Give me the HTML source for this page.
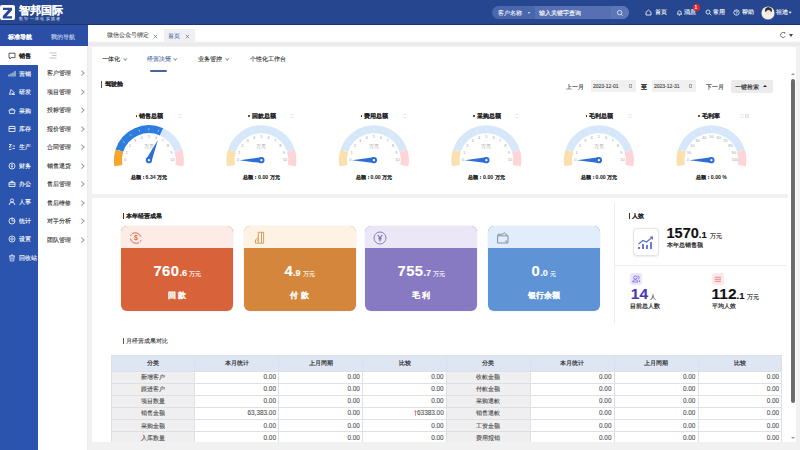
<!DOCTYPE html>
<html><head><meta charset="utf-8">
<style>
*{margin:0;padding:0;box-sizing:border-box}
html,body{width:800px;height:450px;overflow:hidden;background:#f1f1f2;font-family:"Liberation Sans",sans-serif;color:#333}
div,span{-webkit-text-stroke-width:0.12px}
div[style*="font-weight:bold"]{-webkit-text-stroke-width:0.03px}
div,span{position:absolute;white-space:nowrap}
.t6{font-size:6px;line-height:8px}
.hdr{left:0;top:0;width:800px;height:25px;background:#26478f;box-shadow:inset 0 -1px 0 rgba(0,0,0,0.25)}
.mi{left:0;width:38px;height:18px;color:#fff;font-size:6px;line-height:18px}
.mi span{left:19px;top:0}
.mi svg{position:absolute;left:8px;top:6px}
.sm{left:47px;font-size:6px;color:#333;line-height:8px}
.chev{left:80px;width:3.5px;height:3.5px;border-right:0.7px solid #999;border-top:0.7px solid #999;transform:rotate(45deg)}
.hi{top:8px;font-size:6px;line-height:8px;color:#fff}
</style></head><body>
<!-- header -->
<div class="hdr">
  <div style="left:0;top:5px;width:15px;height:15px;background:#fff;border-radius:2px">
    <svg width="15" height="15" viewBox="0 0 15 15" style="position:absolute;left:0;top:0"><path d="M3 2.8H12V5.2L6.6 11.2H12V13.4H2.8V11L8.2 5H3Z" fill="#27489b"/></svg>
  </div>
  <div style="left:18.5px;top:3.5px;font-size:11px;line-height:12px;color:#fff;font-weight:bold;letter-spacing:0px">智邦国际</div>
  <div style="left:19px;top:16px;font-size:4.2px;line-height:5px;color:#e6ebf7;letter-spacing:1.35px;-webkit-text-stroke-width:0">数智一体化实践者</div>
  <!-- search -->
  <div style="left:492px;top:6px;width:137px;height:13px;border-radius:7px;background:#4a67ad;overflow:hidden">
    <div style="left:43px;top:0;width:76px;height:13px;background:#5670b3"></div>
    <div style="left:119px;top:0;width:18px;height:13px;background:#5d76b6"></div>
    <div style="left:6px;top:2.5px;font-size:6px;line-height:8px;color:#e8edf7">客户名称</div>
    <div style="left:36px;top:6px;width:0;height:0;border-left:1.5px solid transparent;border-right:1.5px solid transparent;border-top:2px solid #e8edf7"></div>
    <div style="left:47px;top:2.5px;font-size:6px;line-height:8px;color:#fff">输入关键字查询</div>
    <svg width="8" height="8" viewBox="0 0 8 8" style="position:absolute;left:124px;top:2.5px"><circle cx="3.6" cy="3.6" r="2.2" fill="none" stroke="#e8edf7" stroke-width="0.8"/><path d="M5.2 5.2L6.6 6.6" stroke="#e8edf7" stroke-width="0.8"/></svg>
  </div>
  <!-- right icons -->
  <svg width="7" height="7" viewBox="0 0 7 7" style="position:absolute;left:645px;top:9px"><path d="M1 3.2L3.5 1L6 3.2V6H1Z" fill="none" stroke="#fff" stroke-width="0.8"/></svg>
  <div class="hi" style="left:654.5px">首页</div>
  <svg width="7" height="7" viewBox="0 0 7 7" style="position:absolute;left:676px;top:9px"><path d="M1.9 5.2V3.4A1.6 1.6 0 0 1 5.1 3.4V5.2M1 5.2H6M2.9 6.3H4.1" fill="none" stroke="#fff" stroke-width="0.75"/></svg>
  <div class="hi" style="left:684px">消息</div>
  <div style="left:692.5px;top:4px;width:7px;height:7px;border-radius:3.5px;background:#e3262a;color:#fff;font-size:5px;line-height:7px;text-align:center;font-weight:bold">1</div>
  <svg width="7" height="7" viewBox="0 0 7 7" style="position:absolute;left:705px;top:9px"><circle cx="3" cy="3" r="2" fill="none" stroke="#fff" stroke-width="0.8"/><path d="M4.5 4.5L6.3 6.3" stroke="#fff" stroke-width="0.8"/></svg>
  <div class="hi" style="left:712.5px">常用</div>
  <svg width="7" height="7" viewBox="0 0 7 7" style="position:absolute;left:733px;top:9px"><circle cx="3.5" cy="3.5" r="2.7" fill="none" stroke="#fff" stroke-width="0.75"/><path d="M2.6 2.8A0.9 0.9 0 1 1 3.5 3.7V4.3M3.5 4.8V5.4" fill="none" stroke="#fff" stroke-width="0.7"/></svg>
  <div class="hi" style="left:741.5px">帮助</div>
  <div style="left:762px;top:6.5px;width:12px;height:12px;border-radius:6px;background:#f4efe9;overflow:hidden;box-shadow:0 0 0 0.6px #dfe3ea">
    <div style="left:2.5px;top:0.5px;width:7px;height:4.5px;border-radius:3.5px 3.5px 1px 1px;background:#333"></div>
    <div style="left:3.5px;top:3.5px;width:5px;height:5px;border-radius:2.5px;background:#f3e3d2"></div>
  </div>
  <div class="hi" style="left:776px">祖迪</div>
  <div style="left:789.3px;top:11px;width:2.2px;height:2.2px;border-right:0.6px solid #dfe5f2;border-bottom:0.6px solid #dfe5f2;transform:rotate(45deg)"></div>
</div>
<!-- nav -->
<div style="left:0;top:25px;width:88px;height:425px;background:#fff;border-right:0.6px solid #ececee">
  <div style="left:0;top:0;width:88px;height:21px;background:#2b4fa7"></div>
  <div style="left:7.5px;top:7.5px;font-size:6px;line-height:8px;color:#fff;font-weight:bold">标准导航</div>
  <div style="left:51px;top:7.5px;font-size:6px;line-height:8px;color:#c9d4ee">我的导航</div>
  <svg width="8" height="8" viewBox="0 0 8 8" style="position:absolute;left:7.5px;top:26.5px"><path d="M1 1.2H7V5.6H3.2L1.8 7V5.6H1Z" fill="none" stroke="#333" stroke-width="0.8"/></svg>
  <div style="left:18.5px;top:27px;font-size:6px;line-height:8px;color:#222;font-weight:bold">销售</div>
  <svg width="8" height="7" viewBox="0 0 8 7" style="position:absolute;left:48.5px;top:26.5px"><path d="M0.5 1H7.5M3 3.5H7.5M0.5 6H7.5" stroke="#999" stroke-width="0.6"/></svg>
  <div style="left:0;top:40px;width:38px;height:385px;background:#2b54ae"></div>
</div>
<svg width="8" height="8" viewBox="0 0 8 8" style="position:absolute;left:7.5px;top:70.00px"><path d="M1 6.5V4.5M3 6.5V3.5M5 6.5V2.5M7 6.5V1" stroke="#fff" stroke-width="0.9"/></svg>
<div style="left:18.5px;top:70.00px;font-size:6px;line-height:8px;color:#fff">营销</div>
<svg width="8" height="8" viewBox="0 0 8 8" style="position:absolute;left:7.5px;top:88.35px"><path d="M1.5 6.5L3 1.5L6.5 5L1.5 6.5ZM4 6.5H7" fill="none" stroke="#fff" stroke-width="0.8"/></svg>
<div style="left:18.5px;top:88.35px;font-size:6px;line-height:8px;color:#fff">研发</div>
<svg width="8" height="8" viewBox="0 0 8 8" style="position:absolute;left:7.5px;top:106.70px"><path d="M1 3H7L6.3 6.5H1.7ZM2.5 3L3.5 1.2M5.5 3L4.5 1.2" fill="none" stroke="#fff" stroke-width="0.8"/></svg>
<div style="left:18.5px;top:106.70px;font-size:6px;line-height:8px;color:#fff">采购</div>
<svg width="8" height="8" viewBox="0 0 8 8" style="position:absolute;left:7.5px;top:125.05px"><path d="M1 1.5H7V6.5H1ZM1 3.5H7M3 1.5V0.8M5 1.5V0.8" fill="none" stroke="#fff" stroke-width="0.8"/></svg>
<div style="left:18.5px;top:125.05px;font-size:6px;line-height:8px;color:#fff">库存</div>
<svg width="8" height="8" viewBox="0 0 8 8" style="position:absolute;left:7.5px;top:143.40px"><path d="M1 1.5H3.5L1 4H3.5M4.5 3H7M4.5 5.5H7M1 6.5H3.5" fill="none" stroke="#fff" stroke-width="0.8"/></svg>
<div style="left:18.5px;top:143.40px;font-size:6px;line-height:8px;color:#fff">生产</div>
<svg width="8" height="8" viewBox="0 0 8 8" style="position:absolute;left:7.5px;top:161.75px"><circle cx="4" cy="4" r="3" fill="none" stroke="#fff" stroke-width="0.8"/><path d="M4 2.2V5.8M2.8 3H5M2.8 4.6H5" stroke="#fff" stroke-width="0.6"/></svg>
<div style="left:18.5px;top:161.75px;font-size:6px;line-height:8px;color:#fff">财务</div>
<svg width="8" height="8" viewBox="0 0 8 8" style="position:absolute;left:7.5px;top:180.10px"><path d="M1 2.5H7V6.5H1ZM3 2.5V1.2H5V2.5M1 4.2H7" fill="none" stroke="#fff" stroke-width="0.8"/></svg>
<div style="left:18.5px;top:180.10px;font-size:6px;line-height:8px;color:#fff">办公</div>
<svg width="8" height="8" viewBox="0 0 8 8" style="position:absolute;left:7.5px;top:198.45px"><circle cx="4" cy="2.5" r="1.6" fill="none" stroke="#fff" stroke-width="0.8"/><path d="M1.2 7A2.8 2.8 0 0 1 6.8 7" fill="none" stroke="#fff" stroke-width="0.8"/></svg>
<div style="left:18.5px;top:198.45px;font-size:6px;line-height:8px;color:#fff">人事</div>
<svg width="8" height="8" viewBox="0 0 8 8" style="position:absolute;left:7.5px;top:216.80px"><circle cx="4" cy="4" r="3" fill="none" stroke="#fff" stroke-width="0.8"/><path d="M4 1V4H7" fill="none" stroke="#fff" stroke-width="0.8"/></svg>
<div style="left:18.5px;top:216.80px;font-size:6px;line-height:8px;color:#fff">统计</div>
<svg width="8" height="8" viewBox="0 0 8 8" style="position:absolute;left:7.5px;top:235.15px"><circle cx="4" cy="4" r="3" fill="none" stroke="#fff" stroke-width="0.8"/><circle cx="4" cy="4" r="1.2" fill="none" stroke="#fff" stroke-width="0.8"/></svg>
<div style="left:18.5px;top:235.15px;font-size:6px;line-height:8px;color:#fff">设置</div>
<svg width="8" height="8" viewBox="0 0 8 8" style="position:absolute;left:7.5px;top:253.50px"><path d="M1 2H7M3 2V1H5V2M1.8 2L2.3 7H5.7L6.2 2M3.3 3.5V5.5M4.7 3.5V5.5" fill="none" stroke="#fff" stroke-width="0.7"/></svg>
<div style="left:18.5px;top:253.50px;font-size:6px;line-height:8px;color:#fff">回收站</div>
<div style="left:47px;top:69.00px;font-size:6px;line-height:8px;color:#333">客户管理</div>
<div class="chev" style="top:71.20px"></div>
<div style="left:47px;top:87.50px;font-size:6px;line-height:8px;color:#333">项目管理</div>
<div class="chev" style="top:89.70px"></div>
<div style="left:47px;top:106.00px;font-size:6px;line-height:8px;color:#333">投标管理</div>
<div class="chev" style="top:108.20px"></div>
<div style="left:47px;top:124.50px;font-size:6px;line-height:8px;color:#333">报价管理</div>
<div class="chev" style="top:126.70px"></div>
<div style="left:47px;top:143.00px;font-size:6px;line-height:8px;color:#333">合同管理</div>
<div class="chev" style="top:145.20px"></div>
<div style="left:47px;top:161.50px;font-size:6px;line-height:8px;color:#333">销售退货</div>
<div class="chev" style="top:163.70px"></div>
<div style="left:47px;top:180.00px;font-size:6px;line-height:8px;color:#333">售后管理</div>
<div class="chev" style="top:182.20px"></div>
<div style="left:47px;top:198.50px;font-size:6px;line-height:8px;color:#333">售后维修</div>
<div class="chev" style="top:200.70px"></div>
<div style="left:47px;top:217.00px;font-size:6px;line-height:8px;color:#333">对手分析</div>
<div class="chev" style="top:219.20px"></div>
<div style="left:47px;top:235.50px;font-size:6px;line-height:8px;color:#333">团队管理</div>
<div class="chev" style="top:237.70px"></div>

<div style="left:88px;top:25px;width:712px;height:16px;background:#fff"></div>
<div style="left:88px;top:40.5px;width:712px;height:6.5px;background:linear-gradient(#fbfbfb,#e9e9ea 45%,#ececed 70%,#f3f3f3)"></div>
<div style="left:106.5px;top:31px;font-size:6px;line-height:8px;color:#555">微信公众号绑定</div>
<svg width="5" height="5" viewBox="0 0 5 5" style="position:absolute;left:152.9px;top:33.6px"><path d="M0.8 0.8L4.2 4.2M4.2 0.8L0.8 4.2" stroke="#555" stroke-width="0.6"/></svg>
<div style="left:164px;top:29px;width:31px;height:12.5px;background:#eff0f3"></div>
<div style="left:167.5px;top:31.5px;font-size:6px;line-height:8px;color:#5a75ae">首页</div>
<svg width="5" height="5" viewBox="0 0 5 5" style="position:absolute;left:184.7px;top:33.6px"><path d="M0.8 0.8L4.2 4.2M4.2 0.8L0.8 4.2" stroke="#555" stroke-width="0.6"/></svg>
<svg width="8" height="8" viewBox="0 0 8 8" style="position:absolute;left:779px;top:31px"><path d="M6 2.5A2.5 2.5 0 1 0 6.3 5" fill="none" stroke="#555" stroke-width="0.8"/><path d="M4.8 1.5L6.4 2.6L6 0.9Z" fill="#555"/></svg>
<div style="left:789px;top:33.5px;width:0;height:0;border-left:2.5px solid transparent;border-right:2.5px solid transparent;border-top:3px solid #444"></div>
<div style="left:92px;top:47px;width:704px;height:147px;background:#fff"></div>
<div style="left:92px;top:198px;width:704px;height:243.8px;background:#fff"></div>
<div style="left:101.5px;top:54.5px;font-size:6px;line-height:8px;color:#333">一体化</div>
<div style="left:123.7px;top:56.8px;width:2.6px;height:2.6px;border-right:0.6px solid #999;border-bottom:0.6px solid #999;transform:rotate(45deg)"></div>
<div style="left:146.5px;top:54.5px;font-size:6px;line-height:8px;color:#5571ae">经营决策</div>
<div style="left:173.7px;top:56.8px;width:2.6px;height:2.6px;border-right:0.6px solid #999;border-bottom:0.6px solid #999;transform:rotate(45deg)"></div>
<div style="left:198px;top:54.5px;font-size:6px;line-height:8px;color:#333">业务管控</div>
<div style="left:226.2px;top:56.8px;width:2.6px;height:2.6px;border-right:0.6px solid #999;border-bottom:0.6px solid #999;transform:rotate(45deg)"></div>
<div style="left:249.5px;top:54.5px;font-size:6px;line-height:8px;color:#333">个性化工作台</div>
<div style="left:150px;top:69.5px;width:17px;height:2px;background:#4a62a0;border-radius:1px"></div>
<div style="left:101.2px;top:81px;width:1px;height:6.5px;background:#555"></div>
<div style="left:104.5px;top:80px;font-size:6px;line-height:8px;color:#222;font-weight:bold">驾驶舱</div>
<div style="left:566px;top:82.5px;font-size:5.5px;line-height:8px;color:#333">上一月</div>
<div style="left:591px;top:80px;width:45px;height:11.5px;background:#f0f0f0;border-radius:1px"></div>
<div style="left:593px;top:82px;font-size:5px;line-height:8px;color:#444">2023-12-01</div>
<div style="left:628.5px;top:84px;width:3.5px;height:3.5px;border:0.6px solid #aaa"></div>
<div style="left:641px;top:82.5px;font-size:5.5px;line-height:8px;color:#222;font-weight:bold">至</div>
<div style="left:652px;top:80px;width:44px;height:11.5px;background:#f0f0f0;border-radius:1px"></div>
<div style="left:654px;top:82px;font-size:5px;line-height:8px;color:#444">2023-12-31</div>
<div style="left:688.5px;top:84px;width:3.5px;height:3.5px;border:0.6px solid #aaa"></div>
<div style="left:705.5px;top:82.5px;font-size:5.5px;line-height:8px;color:#333">下一月</div>
<div style="left:731px;top:80px;width:42px;height:12.5px;background:#ececec;border-radius:1px"></div>
<div style="left:735px;top:82.5px;font-size:5.5px;line-height:8px;color:#222">一键检索</div>
<div style="left:763px;top:85px;width:0;height:0;border-left:2px solid transparent;border-right:2px solid transparent;border-bottom:2.2px solid #222"></div>
<div style="left:788px;top:47px;width:8px;height:394.8px;background:#fff"></div>
<div style="left:791px;top:78.5px;width:4px;height:324px;background:#6b6b6b;border-radius:2px"></div>
<div style="left:790.8px;top:73.2px;width:0;height:0;border-left:2.2px solid transparent;border-right:2.2px solid transparent;border-bottom:2.8px solid #9a9a9a"></div>
<div style="left:790.8px;top:436.5px;width:0;height:0;border-left:2.2px solid transparent;border-right:2.2px solid transparent;border-top:2.8px solid #9a9a9a"></div>
<div style="left:135.90px;top:115.3px;width:1.6px;height:1.6px;border-radius:1px;background:#222"></div>
<div style="left:139.30px;top:112.3px;font-size:6px;line-height:8px;color:#222;font-weight:bold">销售总额</div>
<svg width="6" height="6" viewBox="0 0 6 6" style="position:absolute;left:176.90px;top:113px"><path d="M1.2 2.5A2 2 0 0 1 4.8 2.2M4.8 3.5A2 2 0 0 1 1.2 3.8" fill="none" stroke="#d6d6d6" stroke-width="0.6"/></svg>
<div style="left:108.90px;width:80px;text-align:center;top:173px;font-size:5.2px;line-height:8px;color:#222;font-weight:bold">总额：6.34 万元</div>
<div style="left:248.40px;top:115.3px;width:1.6px;height:1.6px;border-radius:1px;background:#222"></div>
<div style="left:251.80px;top:112.3px;font-size:6px;line-height:8px;color:#222;font-weight:bold">回款总额</div>
<svg width="6" height="6" viewBox="0 0 6 6" style="position:absolute;left:289.40px;top:113px"><path d="M1.2 2.5A2 2 0 0 1 4.8 2.2M4.8 3.5A2 2 0 0 1 1.2 3.8" fill="none" stroke="#d6d6d6" stroke-width="0.6"/></svg>
<div style="left:221.40px;width:80px;text-align:center;top:173px;font-size:5.2px;line-height:8px;color:#222;font-weight:bold">总额：0.00 万元</div>
<div style="left:360.90px;top:115.3px;width:1.6px;height:1.6px;border-radius:1px;background:#222"></div>
<div style="left:364.30px;top:112.3px;font-size:6px;line-height:8px;color:#222;font-weight:bold">费用总额</div>
<svg width="6" height="6" viewBox="0 0 6 6" style="position:absolute;left:401.90px;top:113px"><path d="M1.2 2.5A2 2 0 0 1 4.8 2.2M4.8 3.5A2 2 0 0 1 1.2 3.8" fill="none" stroke="#d6d6d6" stroke-width="0.6"/></svg>
<div style="left:333.90px;width:80px;text-align:center;top:173px;font-size:5.2px;line-height:8px;color:#222;font-weight:bold">总额：0.00 万元</div>
<div style="left:473.40px;top:115.3px;width:1.6px;height:1.6px;border-radius:1px;background:#222"></div>
<div style="left:476.80px;top:112.3px;font-size:6px;line-height:8px;color:#222;font-weight:bold">采购总额</div>
<svg width="6" height="6" viewBox="0 0 6 6" style="position:absolute;left:514.40px;top:113px"><path d="M1.2 2.5A2 2 0 0 1 4.8 2.2M4.8 3.5A2 2 0 0 1 1.2 3.8" fill="none" stroke="#d6d6d6" stroke-width="0.6"/></svg>
<div style="left:446.40px;width:80px;text-align:center;top:173px;font-size:5.2px;line-height:8px;color:#222;font-weight:bold">总额：0.00 万元</div>
<div style="left:585.90px;top:115.3px;width:1.6px;height:1.6px;border-radius:1px;background:#222"></div>
<div style="left:589.30px;top:112.3px;font-size:6px;line-height:8px;color:#222;font-weight:bold">毛利总额</div>
<svg width="6" height="6" viewBox="0 0 6 6" style="position:absolute;left:626.90px;top:113px"><path d="M1.2 2.5A2 2 0 0 1 4.8 2.2M4.8 3.5A2 2 0 0 1 1.2 3.8" fill="none" stroke="#d6d6d6" stroke-width="0.6"/></svg>
<div style="left:558.90px;width:80px;text-align:center;top:173px;font-size:5.2px;line-height:8px;color:#222;font-weight:bold">总额：0.00 万元</div>
<div style="left:698.40px;top:115.3px;width:1.6px;height:1.6px;border-radius:1px;background:#222"></div>
<div style="left:701.80px;top:112.3px;font-size:6px;line-height:8px;color:#222;font-weight:bold">毛利率</div>
<svg width="6" height="6" viewBox="0 0 6 6" style="position:absolute;left:739.40px;top:113px"><path d="M1.2 2.5A2 2 0 0 1 4.8 2.2M4.8 3.5A2 2 0 0 1 1.2 3.8" fill="none" stroke="#d6d6d6" stroke-width="0.6"/></svg>
<div style="left:744.90px;top:113.5px;width:4.5px;height:4.5px;border:0.6px solid #e2e2e2;background:#f0f0f0"></div>
<div style="left:671.40px;width:80px;text-align:center;top:173px;font-size:5.2px;line-height:8px;color:#222;font-weight:bold">总额：0.00 %</div>
<svg width="800" height="450" viewBox="0 0 800 450" style="position:absolute;left:0;top:0">
<path d="M118.37 165.58A31 31 0 0 1 119.42 150.62" fill="none" stroke="#f5a52a" stroke-width="8"/>
<path d="M119.42 150.62A31 31 0 0 1 161.57 131.91" fill="none" stroke="#2d7ddf" stroke-width="8"/>
<path d="M161.57 131.91A31 31 0 0 1 178.38 150.62" fill="none" stroke="#d5e7f8" stroke-width="8"/>
<path d="M178.38 150.62A31 31 0 0 1 179.43 165.58" fill="none" stroke="#fcd5d7" stroke-width="8"/>
<line x1="120.56" y1="150.99" x2="118.28" y2="150.25" stroke="#fff" stroke-width="0.6" opacity="0.8"/>
<line x1="124.79" y1="142.68" x2="122.85" y2="141.27" stroke="#fff" stroke-width="0.6" opacity="0.8"/>
<line x1="131.38" y1="136.09" x2="129.97" y2="134.15" stroke="#fff" stroke-width="0.6" opacity="0.8"/>
<line x1="139.69" y1="131.86" x2="138.95" y2="129.58" stroke="#fff" stroke-width="0.6" opacity="0.8"/>
<line x1="148.90" y1="130.40" x2="148.90" y2="128.00" stroke="#fff" stroke-width="0.6" opacity="0.8"/>
<line x1="158.11" y1="131.86" x2="158.85" y2="129.58" stroke="#fff" stroke-width="0.6" opacity="0.8"/>
<line x1="166.42" y1="136.09" x2="167.83" y2="134.15" stroke="#fff" stroke-width="0.6" opacity="0.8"/>
<line x1="173.01" y1="142.68" x2="174.95" y2="141.27" stroke="#fff" stroke-width="0.6" opacity="0.8"/>
<line x1="177.24" y1="150.99" x2="179.52" y2="150.25" stroke="#fff" stroke-width="0.6" opacity="0.8"/>
<text x="125.40" y="161.10" font-size="4" fill="#9ca3ad" text-anchor="middle" font-family="Liberation Sans">0</text>
<text x="126.55" y="153.84" font-size="4" fill="#9ca3ad" text-anchor="middle" font-family="Liberation Sans">1</text>
<text x="129.89" y="147.29" font-size="4" fill="#9ca3ad" text-anchor="middle" font-family="Liberation Sans">2</text>
<text x="135.09" y="142.09" font-size="4" fill="#9ca3ad" text-anchor="middle" font-family="Liberation Sans">3</text>
<text x="141.64" y="138.75" font-size="4" fill="#9ca3ad" text-anchor="middle" font-family="Liberation Sans">4</text>
<text x="148.90" y="137.60" font-size="4" fill="#9ca3ad" text-anchor="middle" font-family="Liberation Sans">5</text>
<text x="156.16" y="138.75" font-size="4" fill="#9ca3ad" text-anchor="middle" font-family="Liberation Sans">6</text>
<text x="162.71" y="142.09" font-size="4" fill="#9ca3ad" text-anchor="middle" font-family="Liberation Sans">7</text>
<text x="167.91" y="147.29" font-size="4" fill="#9ca3ad" text-anchor="middle" font-family="Liberation Sans">8</text>
<text x="171.25" y="153.84" font-size="4" fill="#9ca3ad" text-anchor="middle" font-family="Liberation Sans">9</text>
<text x="172.40" y="161.10" font-size="4" fill="#9ca3ad" text-anchor="middle" font-family="Liberation Sans">10</text>
<text x="148.90" y="148.20" font-size="4.6" fill="#9097a2" text-anchor="middle">万元</text>
<path d="M157.89 140.12L146.25 159.01L151.55 161.39Z" fill="#2d6fd6"/>
<circle cx="148.90" cy="160.20" r="3.1" fill="#2d6fd6"/><circle cx="148.90" cy="160.20" r="1.1" fill="#fff"/>
<path d="M230.87 165.58A31 31 0 0 1 231.92 150.62" fill="none" stroke="#fbdfae" stroke-width="8"/>
<path d="M231.92 150.62A31 31 0 0 1 290.88 150.62" fill="none" stroke="#d5e7f8" stroke-width="8"/>
<path d="M290.88 150.62A31 31 0 0 1 291.93 165.58" fill="none" stroke="#fcd5d7" stroke-width="8"/>
<line x1="233.06" y1="150.99" x2="230.78" y2="150.25" stroke="#fff" stroke-width="0.6" opacity="0.8"/>
<line x1="237.29" y1="142.68" x2="235.35" y2="141.27" stroke="#fff" stroke-width="0.6" opacity="0.8"/>
<line x1="243.88" y1="136.09" x2="242.47" y2="134.15" stroke="#fff" stroke-width="0.6" opacity="0.8"/>
<line x1="252.19" y1="131.86" x2="251.45" y2="129.58" stroke="#fff" stroke-width="0.6" opacity="0.8"/>
<line x1="261.40" y1="130.40" x2="261.40" y2="128.00" stroke="#fff" stroke-width="0.6" opacity="0.8"/>
<line x1="270.61" y1="131.86" x2="271.35" y2="129.58" stroke="#fff" stroke-width="0.6" opacity="0.8"/>
<line x1="278.92" y1="136.09" x2="280.33" y2="134.15" stroke="#fff" stroke-width="0.6" opacity="0.8"/>
<line x1="285.51" y1="142.68" x2="287.45" y2="141.27" stroke="#fff" stroke-width="0.6" opacity="0.8"/>
<line x1="289.74" y1="150.99" x2="292.02" y2="150.25" stroke="#fff" stroke-width="0.6" opacity="0.8"/>
<text x="237.90" y="161.10" font-size="4" fill="#9ca3ad" text-anchor="middle" font-family="Liberation Sans">0</text>
<text x="239.05" y="153.84" font-size="4" fill="#9ca3ad" text-anchor="middle" font-family="Liberation Sans">1</text>
<text x="242.39" y="147.29" font-size="4" fill="#9ca3ad" text-anchor="middle" font-family="Liberation Sans">2</text>
<text x="247.59" y="142.09" font-size="4" fill="#9ca3ad" text-anchor="middle" font-family="Liberation Sans">3</text>
<text x="254.14" y="138.75" font-size="4" fill="#9ca3ad" text-anchor="middle" font-family="Liberation Sans">4</text>
<text x="261.40" y="137.60" font-size="4" fill="#9ca3ad" text-anchor="middle" font-family="Liberation Sans">5</text>
<text x="268.66" y="138.75" font-size="4" fill="#9ca3ad" text-anchor="middle" font-family="Liberation Sans">6</text>
<text x="275.21" y="142.09" font-size="4" fill="#9ca3ad" text-anchor="middle" font-family="Liberation Sans">7</text>
<text x="280.41" y="147.29" font-size="4" fill="#9ca3ad" text-anchor="middle" font-family="Liberation Sans">8</text>
<text x="283.75" y="153.84" font-size="4" fill="#9ca3ad" text-anchor="middle" font-family="Liberation Sans">9</text>
<text x="284.90" y="161.10" font-size="4" fill="#9ca3ad" text-anchor="middle" font-family="Liberation Sans">10</text>
<text x="261.40" y="148.20" font-size="4.6" fill="#9097a2" text-anchor="middle">万元</text>
<path d="M239.40 160.20L261.40 163.10L261.40 157.30Z" fill="#2d6fd6"/>
<circle cx="261.40" cy="160.20" r="3.1" fill="#2d6fd6"/><circle cx="261.40" cy="160.20" r="1.1" fill="#fff"/>
<path d="M343.37 165.58A31 31 0 0 1 344.42 150.62" fill="none" stroke="#fbdfae" stroke-width="8"/>
<path d="M344.42 150.62A31 31 0 0 1 403.38 150.62" fill="none" stroke="#d5e7f8" stroke-width="8"/>
<path d="M403.38 150.62A31 31 0 0 1 404.43 165.58" fill="none" stroke="#fcd5d7" stroke-width="8"/>
<line x1="345.56" y1="150.99" x2="343.28" y2="150.25" stroke="#fff" stroke-width="0.6" opacity="0.8"/>
<line x1="349.79" y1="142.68" x2="347.85" y2="141.27" stroke="#fff" stroke-width="0.6" opacity="0.8"/>
<line x1="356.38" y1="136.09" x2="354.97" y2="134.15" stroke="#fff" stroke-width="0.6" opacity="0.8"/>
<line x1="364.69" y1="131.86" x2="363.95" y2="129.58" stroke="#fff" stroke-width="0.6" opacity="0.8"/>
<line x1="373.90" y1="130.40" x2="373.90" y2="128.00" stroke="#fff" stroke-width="0.6" opacity="0.8"/>
<line x1="383.11" y1="131.86" x2="383.85" y2="129.58" stroke="#fff" stroke-width="0.6" opacity="0.8"/>
<line x1="391.42" y1="136.09" x2="392.83" y2="134.15" stroke="#fff" stroke-width="0.6" opacity="0.8"/>
<line x1="398.01" y1="142.68" x2="399.95" y2="141.27" stroke="#fff" stroke-width="0.6" opacity="0.8"/>
<line x1="402.24" y1="150.99" x2="404.52" y2="150.25" stroke="#fff" stroke-width="0.6" opacity="0.8"/>
<text x="350.40" y="161.10" font-size="4" fill="#9ca3ad" text-anchor="middle" font-family="Liberation Sans">0</text>
<text x="351.55" y="153.84" font-size="4" fill="#9ca3ad" text-anchor="middle" font-family="Liberation Sans">1</text>
<text x="354.89" y="147.29" font-size="4" fill="#9ca3ad" text-anchor="middle" font-family="Liberation Sans">2</text>
<text x="360.09" y="142.09" font-size="4" fill="#9ca3ad" text-anchor="middle" font-family="Liberation Sans">3</text>
<text x="366.64" y="138.75" font-size="4" fill="#9ca3ad" text-anchor="middle" font-family="Liberation Sans">4</text>
<text x="373.90" y="137.60" font-size="4" fill="#9ca3ad" text-anchor="middle" font-family="Liberation Sans">5</text>
<text x="381.16" y="138.75" font-size="4" fill="#9ca3ad" text-anchor="middle" font-family="Liberation Sans">6</text>
<text x="387.71" y="142.09" font-size="4" fill="#9ca3ad" text-anchor="middle" font-family="Liberation Sans">7</text>
<text x="392.91" y="147.29" font-size="4" fill="#9ca3ad" text-anchor="middle" font-family="Liberation Sans">8</text>
<text x="396.25" y="153.84" font-size="4" fill="#9ca3ad" text-anchor="middle" font-family="Liberation Sans">9</text>
<text x="397.40" y="161.10" font-size="4" fill="#9ca3ad" text-anchor="middle" font-family="Liberation Sans">10</text>
<text x="373.90" y="148.20" font-size="4.6" fill="#9097a2" text-anchor="middle">万元</text>
<path d="M351.90 160.20L373.90 163.10L373.90 157.30Z" fill="#2d6fd6"/>
<circle cx="373.90" cy="160.20" r="3.1" fill="#2d6fd6"/><circle cx="373.90" cy="160.20" r="1.1" fill="#fff"/>
<path d="M455.87 165.58A31 31 0 0 1 456.92 150.62" fill="none" stroke="#fbdfae" stroke-width="8"/>
<path d="M456.92 150.62A31 31 0 0 1 515.88 150.62" fill="none" stroke="#d5e7f8" stroke-width="8"/>
<path d="M515.88 150.62A31 31 0 0 1 516.93 165.58" fill="none" stroke="#fcd5d7" stroke-width="8"/>
<line x1="458.06" y1="150.99" x2="455.78" y2="150.25" stroke="#fff" stroke-width="0.6" opacity="0.8"/>
<line x1="462.29" y1="142.68" x2="460.35" y2="141.27" stroke="#fff" stroke-width="0.6" opacity="0.8"/>
<line x1="468.88" y1="136.09" x2="467.47" y2="134.15" stroke="#fff" stroke-width="0.6" opacity="0.8"/>
<line x1="477.19" y1="131.86" x2="476.45" y2="129.58" stroke="#fff" stroke-width="0.6" opacity="0.8"/>
<line x1="486.40" y1="130.40" x2="486.40" y2="128.00" stroke="#fff" stroke-width="0.6" opacity="0.8"/>
<line x1="495.61" y1="131.86" x2="496.35" y2="129.58" stroke="#fff" stroke-width="0.6" opacity="0.8"/>
<line x1="503.92" y1="136.09" x2="505.33" y2="134.15" stroke="#fff" stroke-width="0.6" opacity="0.8"/>
<line x1="510.51" y1="142.68" x2="512.45" y2="141.27" stroke="#fff" stroke-width="0.6" opacity="0.8"/>
<line x1="514.74" y1="150.99" x2="517.02" y2="150.25" stroke="#fff" stroke-width="0.6" opacity="0.8"/>
<text x="462.90" y="161.10" font-size="4" fill="#9ca3ad" text-anchor="middle" font-family="Liberation Sans">0</text>
<text x="464.05" y="153.84" font-size="4" fill="#9ca3ad" text-anchor="middle" font-family="Liberation Sans">1</text>
<text x="467.39" y="147.29" font-size="4" fill="#9ca3ad" text-anchor="middle" font-family="Liberation Sans">2</text>
<text x="472.59" y="142.09" font-size="4" fill="#9ca3ad" text-anchor="middle" font-family="Liberation Sans">3</text>
<text x="479.14" y="138.75" font-size="4" fill="#9ca3ad" text-anchor="middle" font-family="Liberation Sans">4</text>
<text x="486.40" y="137.60" font-size="4" fill="#9ca3ad" text-anchor="middle" font-family="Liberation Sans">5</text>
<text x="493.66" y="138.75" font-size="4" fill="#9ca3ad" text-anchor="middle" font-family="Liberation Sans">6</text>
<text x="500.21" y="142.09" font-size="4" fill="#9ca3ad" text-anchor="middle" font-family="Liberation Sans">7</text>
<text x="505.41" y="147.29" font-size="4" fill="#9ca3ad" text-anchor="middle" font-family="Liberation Sans">8</text>
<text x="508.75" y="153.84" font-size="4" fill="#9ca3ad" text-anchor="middle" font-family="Liberation Sans">9</text>
<text x="509.90" y="161.10" font-size="4" fill="#9ca3ad" text-anchor="middle" font-family="Liberation Sans">10</text>
<text x="486.40" y="148.20" font-size="4.6" fill="#9097a2" text-anchor="middle">万元</text>
<path d="M464.40 160.20L486.40 163.10L486.40 157.30Z" fill="#2d6fd6"/>
<circle cx="486.40" cy="160.20" r="3.1" fill="#2d6fd6"/><circle cx="486.40" cy="160.20" r="1.1" fill="#fff"/>
<path d="M568.37 165.58A31 31 0 0 1 569.42 150.62" fill="none" stroke="#fbdfae" stroke-width="8"/>
<path d="M569.42 150.62A31 31 0 0 1 628.38 150.62" fill="none" stroke="#d5e7f8" stroke-width="8"/>
<path d="M628.38 150.62A31 31 0 0 1 629.43 165.58" fill="none" stroke="#fcd5d7" stroke-width="8"/>
<line x1="570.56" y1="150.99" x2="568.28" y2="150.25" stroke="#fff" stroke-width="0.6" opacity="0.8"/>
<line x1="574.79" y1="142.68" x2="572.85" y2="141.27" stroke="#fff" stroke-width="0.6" opacity="0.8"/>
<line x1="581.38" y1="136.09" x2="579.97" y2="134.15" stroke="#fff" stroke-width="0.6" opacity="0.8"/>
<line x1="589.69" y1="131.86" x2="588.95" y2="129.58" stroke="#fff" stroke-width="0.6" opacity="0.8"/>
<line x1="598.90" y1="130.40" x2="598.90" y2="128.00" stroke="#fff" stroke-width="0.6" opacity="0.8"/>
<line x1="608.11" y1="131.86" x2="608.85" y2="129.58" stroke="#fff" stroke-width="0.6" opacity="0.8"/>
<line x1="616.42" y1="136.09" x2="617.83" y2="134.15" stroke="#fff" stroke-width="0.6" opacity="0.8"/>
<line x1="623.01" y1="142.68" x2="624.95" y2="141.27" stroke="#fff" stroke-width="0.6" opacity="0.8"/>
<line x1="627.24" y1="150.99" x2="629.52" y2="150.25" stroke="#fff" stroke-width="0.6" opacity="0.8"/>
<text x="575.40" y="161.10" font-size="4" fill="#9ca3ad" text-anchor="middle" font-family="Liberation Sans">0</text>
<text x="576.55" y="153.84" font-size="4" fill="#9ca3ad" text-anchor="middle" font-family="Liberation Sans">1</text>
<text x="579.89" y="147.29" font-size="4" fill="#9ca3ad" text-anchor="middle" font-family="Liberation Sans">2</text>
<text x="585.09" y="142.09" font-size="4" fill="#9ca3ad" text-anchor="middle" font-family="Liberation Sans">3</text>
<text x="591.64" y="138.75" font-size="4" fill="#9ca3ad" text-anchor="middle" font-family="Liberation Sans">4</text>
<text x="598.90" y="137.60" font-size="4" fill="#9ca3ad" text-anchor="middle" font-family="Liberation Sans">5</text>
<text x="606.16" y="138.75" font-size="4" fill="#9ca3ad" text-anchor="middle" font-family="Liberation Sans">6</text>
<text x="612.71" y="142.09" font-size="4" fill="#9ca3ad" text-anchor="middle" font-family="Liberation Sans">7</text>
<text x="617.91" y="147.29" font-size="4" fill="#9ca3ad" text-anchor="middle" font-family="Liberation Sans">8</text>
<text x="621.25" y="153.84" font-size="4" fill="#9ca3ad" text-anchor="middle" font-family="Liberation Sans">9</text>
<text x="622.40" y="161.10" font-size="4" fill="#9ca3ad" text-anchor="middle" font-family="Liberation Sans">10</text>
<text x="598.90" y="148.20" font-size="4.6" fill="#9097a2" text-anchor="middle">万元</text>
<path d="M576.90 160.20L598.90 163.10L598.90 157.30Z" fill="#2d6fd6"/>
<circle cx="598.90" cy="160.20" r="3.1" fill="#2d6fd6"/><circle cx="598.90" cy="160.20" r="1.1" fill="#fff"/>
<path d="M680.87 165.58A31 31 0 0 1 681.92 150.62" fill="none" stroke="#fbdfae" stroke-width="8"/>
<path d="M681.92 150.62A31 31 0 0 1 740.88 150.62" fill="none" stroke="#d5e7f8" stroke-width="8"/>
<path d="M740.88 150.62A31 31 0 0 1 741.93 165.58" fill="none" stroke="#fcd5d7" stroke-width="8"/>
<line x1="683.06" y1="150.99" x2="680.78" y2="150.25" stroke="#fff" stroke-width="0.6" opacity="0.8"/>
<line x1="687.29" y1="142.68" x2="685.35" y2="141.27" stroke="#fff" stroke-width="0.6" opacity="0.8"/>
<line x1="693.88" y1="136.09" x2="692.47" y2="134.15" stroke="#fff" stroke-width="0.6" opacity="0.8"/>
<line x1="702.19" y1="131.86" x2="701.45" y2="129.58" stroke="#fff" stroke-width="0.6" opacity="0.8"/>
<line x1="711.40" y1="130.40" x2="711.40" y2="128.00" stroke="#fff" stroke-width="0.6" opacity="0.8"/>
<line x1="720.61" y1="131.86" x2="721.35" y2="129.58" stroke="#fff" stroke-width="0.6" opacity="0.8"/>
<line x1="728.92" y1="136.09" x2="730.33" y2="134.15" stroke="#fff" stroke-width="0.6" opacity="0.8"/>
<line x1="735.51" y1="142.68" x2="737.45" y2="141.27" stroke="#fff" stroke-width="0.6" opacity="0.8"/>
<line x1="739.74" y1="150.99" x2="742.02" y2="150.25" stroke="#fff" stroke-width="0.6" opacity="0.8"/>
<text x="687.90" y="161.10" font-size="4" fill="#9ca3ad" text-anchor="middle" font-family="Liberation Sans">0</text>
<text x="689.05" y="153.84" font-size="4" fill="#9ca3ad" text-anchor="middle" font-family="Liberation Sans">10</text>
<text x="692.39" y="147.29" font-size="4" fill="#9ca3ad" text-anchor="middle" font-family="Liberation Sans">20</text>
<text x="697.59" y="142.09" font-size="4" fill="#9ca3ad" text-anchor="middle" font-family="Liberation Sans">30</text>
<text x="704.14" y="138.75" font-size="4" fill="#9ca3ad" text-anchor="middle" font-family="Liberation Sans">40</text>
<text x="711.40" y="137.60" font-size="4" fill="#9ca3ad" text-anchor="middle" font-family="Liberation Sans">50</text>
<text x="718.66" y="138.75" font-size="4" fill="#9ca3ad" text-anchor="middle" font-family="Liberation Sans">60</text>
<text x="725.21" y="142.09" font-size="4" fill="#9ca3ad" text-anchor="middle" font-family="Liberation Sans">70</text>
<text x="730.41" y="147.29" font-size="4" fill="#9ca3ad" text-anchor="middle" font-family="Liberation Sans">80</text>
<text x="733.75" y="153.84" font-size="4" fill="#9ca3ad" text-anchor="middle" font-family="Liberation Sans">90</text>
<text x="734.90" y="161.10" font-size="4" fill="#9ca3ad" text-anchor="middle" font-family="Liberation Sans">100</text>
<path d="M689.40 160.20L711.40 163.10L711.40 157.30Z" fill="#2d6fd6"/>
<circle cx="711.40" cy="160.20" r="3.1" fill="#2d6fd6"/><circle cx="711.40" cy="160.20" r="1.1" fill="#fff"/>
</svg>
<div style="left:123px;top:212.5px;width:1px;height:6px;background:#333"></div>
<div style="left:126px;top:211.5px;font-size:5.8px;line-height:8px;color:#222;font-weight:bold">本年经营成果</div>
<div style="left:121.2px;top:226.2px;width:112px;height:84.5px;border-radius:6px;background:#d8633a;overflow:hidden;box-shadow:0 0 0 0.5px rgba(0,0,0,0.06)"><div style="left:0;top:0;width:112px;height:21.5px;background:#fdebe5"></div><svg width="14" height="14" viewBox="0 0 14 14" style="position:absolute;left:8px;top:5px"><path d="M11.8 5.6A6 6 0 0 0 3.2 2.6M1.4 7.6A6 6 0 0 0 10.2 11.6M1.6 5A6 6 0 0 1 2.4 3.4M12 9A6 6 0 0 1 11.2 10.6" fill="none" stroke="#cf5a4a" stroke-width="0.9"/><text x="7" y="9.4" font-size="7" text-anchor="middle" fill="#e0703a" font-family="Liberation Sans" font-weight="bold">$</text></svg><div style="left:0;width:112px;top:34.4px;height:20px;text-align:center;color:#fff;font-weight:bold;line-height:20px"><span style="position:static;font-size:14.8px;letter-spacing:0.4px">760</span><span style="position:static;font-size:9px">.6</span><span style="position:static;font-size:6px;font-weight:normal;margin-left:2px">万元</span></div><div style="left:0;width:112px;top:65px;text-align:center;color:#fff;font-weight:bold;font-size:8px;line-height:10px">回 款</div></div>
<div style="left:243.5px;top:226.2px;width:112px;height:84.5px;border-radius:6px;background:#d4873c;overflow:hidden;box-shadow:0 0 0 0.5px rgba(0,0,0,0.06)"><div style="left:0;top:0;width:112px;height:21.5px;background:#fdf2e4"></div><svg width="14" height="14" viewBox="0 0 14 14" style="position:absolute;left:8px;top:5px"><path d="M6.3 1.3H11.6V12.2H6.3ZM9.5 1.3V12.2" fill="none" stroke="#d09550" stroke-width="0.9"/><path d="M6.3 6.5L3.5 8.8V12.2H6.3M4.8 9.8L6.3 8.6" fill="none" stroke="#d09550" stroke-width="0.9"/></svg><div style="left:0;width:112px;top:34.4px;height:20px;text-align:center;color:#fff;font-weight:bold;line-height:20px"><span style="position:static;font-size:14.8px;letter-spacing:0.4px">4</span><span style="position:static;font-size:9px">.9</span><span style="position:static;font-size:6px;font-weight:normal;margin-left:2px">万元</span></div><div style="left:0;width:112px;top:65px;text-align:center;color:#fff;font-weight:bold;font-size:8px;line-height:10px">付 款</div></div>
<div style="left:365.3px;top:226.2px;width:112px;height:84.5px;border-radius:6px;background:#8779c2;overflow:hidden;box-shadow:0 0 0 0.5px rgba(0,0,0,0.06)"><div style="left:0;top:0;width:112px;height:21.5px;background:#ece7f7"></div><svg width="14" height="14" viewBox="0 0 14 14" style="position:absolute;left:8px;top:5px"><circle cx="7" cy="7" r="6" fill="none" stroke="#7f74b8" stroke-width="0.9"/><path d="M4.8 4L7 7L9.2 4M7 7V10.5M5.3 7.8H8.7" fill="none" stroke="#7064b8" stroke-width="1.1"/></svg><div style="left:0;width:112px;top:34.4px;height:20px;text-align:center;color:#fff;font-weight:bold;line-height:20px"><span style="position:static;font-size:14.8px;letter-spacing:0.4px">755</span><span style="position:static;font-size:9px">.7</span><span style="position:static;font-size:6px;font-weight:normal;margin-left:2px">万元</span></div><div style="left:0;width:112px;top:65px;text-align:center;color:#fff;font-weight:bold;font-size:8px;line-height:10px">毛 利</div></div>
<div style="left:487.7px;top:226.2px;width:112px;height:84.5px;border-radius:6px;background:#5e93d5;overflow:hidden;box-shadow:0 0 0 0.5px rgba(0,0,0,0.06)"><div style="left:0;top:0;width:112px;height:21.5px;background:#e2edfb"></div><svg width="14" height="14" viewBox="0 0 14 14" style="position:absolute;left:8px;top:5px"><path d="M1.6 4.8H12V12H1.6ZM1.6 4.8L2.2 3.2H6.5L8.3 1.8L10 3.2L11.3 3.8" fill="none" stroke="#6f7f98" stroke-width="0.85"/><path d="M9.3 10.2H11" stroke="#6f7f98" stroke-width="1"/></svg><div style="left:0;width:112px;top:34.4px;height:20px;text-align:center;color:#fff;font-weight:bold;line-height:20px"><span style="position:static;font-size:14.8px;letter-spacing:0.4px">0</span><span style="position:static;font-size:9px">.0</span><span style="position:static;font-size:6px;font-weight:normal;margin-left:2px">元</span></div><div style="left:0;width:112px;top:65px;text-align:center;color:#fff;font-weight:bold;font-size:8px;line-height:10px">银行余额</div></div>
<div style="left:613.6px;top:203px;width:0.8px;height:120px;background:#ececec"></div>
<div style="left:614.5px;top:264.5px;width:171px;height:0.8px;background:#ececec"></div>
<div style="left:628.5px;top:212.5px;width:1px;height:6px;background:#333"></div>
<div style="left:631.5px;top:211.5px;font-size:5.8px;line-height:8px;color:#222;font-weight:bold">人效</div>
<div style="left:633.3px;top:228px;width:26.2px;height:27.7px;border-radius:4px;background:#fff;border:0.7px solid #e3e5ea;box-shadow:0 0.5px 1.5px rgba(0,0,0,0.08)"><svg width="26" height="28" viewBox="0 0 26 28" style="position:absolute;left:0;top:0"><path d="M5 18V20M9 15V20M13 16V20M17 13V20" stroke="#5b6ed0" stroke-width="1.8"/><path d="M4.5 15L9 11.5L12.5 13L18 8.5" fill="none" stroke="#5b6ed0" stroke-width="1.2"/><path d="M15.5 7.5H19V11Z" fill="#5b6ed0"/></svg></div>
<div style="left:666.5px;top:225px;line-height:16px;color:#111;font-weight:bold"><span style="position:static;font-size:14.5px">1570</span><span style="position:static;font-size:9.5px">.1</span><span style="position:static;font-size:6px;margin-left:3px;font-weight:normal">万元</span></div>
<div style="left:667px;top:240.5px;font-size:5.5px;line-height:8px;color:#222;-webkit-text-stroke-width:0.2px">本年总销售额</div>
<div style="left:630.4px;top:273px;width:11.6px;height:11.6px;border-radius:2.5px;background:#ebe6fa"><svg width="12" height="12" viewBox="0 0 12 12" style="position:absolute;left:0;top:0"><circle cx="5.3" cy="4.6" r="1.7" fill="none" stroke="#7a66d6" stroke-width="0.8"/><path d="M2.5 9A2.8 2.8 0 0 1 8 9ZM7.5 3A1.5 1.5 0 0 1 8 6M8.8 6.8A2.5 2.5 0 0 1 9.6 9" fill="none" stroke="#7a66d6" stroke-width="0.8"/></svg></div>
<div style="left:630.8px;top:286.2px;line-height:16px;color:#4a38b4;font-weight:bold"><span style="position:static;font-size:15.5px">14</span><span style="position:static;font-size:6px;color:#222;margin-left:2px;font-weight:normal">人</span></div>
<div style="left:630.4px;top:302px;font-size:5.8px;line-height:8px;color:#222;-webkit-text-stroke-width:0.2px">目前总人数</div>
<div style="left:712px;top:273px;width:11.6px;height:11.6px;border-radius:2.5px;background:#fde9e9"><svg width="12" height="12" viewBox="0 0 12 12" style="position:absolute;left:0;top:0"><path d="M2.6 4.3H9M2.6 6.3H9M2.6 8.3H9" stroke="#e36a6a" stroke-width="0.75"/></svg></div>
<div style="left:711.5px;top:286.2px;line-height:16px;color:#111;font-weight:bold"><span style="position:static;font-size:15.5px">112</span><span style="position:static;font-size:9.5px">.1</span><span style="position:static;font-size:6px;margin-left:2.5px;font-weight:normal">万元</span></div>
<div style="left:712px;top:302px;font-size:5.8px;line-height:8px;color:#222;-webkit-text-stroke-width:0.2px">平均人效</div>
<div style="left:122.8px;top:338px;width:0.8px;height:6px;background:#555"></div>
<div style="left:125.5px;top:337px;font-size:5.8px;line-height:8px;color:#444">月经营成果对比</div>
<div style="left:111px;top:354.5px;width:671px;height:87.3px;overflow:hidden">
<div style="left:0;top:0;width:671px;height:16.5px;background:#dfe6f3"></div>
<div style="left:0;top:16.50px;width:83.88px;height:12.05px;background:#efefef"></div>
<div style="left:335.50px;top:16.50px;width:83.88px;height:12.05px;background:#efefef"></div>
<div style="left:0;top:28.55px;width:83.88px;height:12.05px;background:#efefef"></div>
<div style="left:335.50px;top:28.55px;width:83.88px;height:12.05px;background:#efefef"></div>
<div style="left:0;top:40.60px;width:83.88px;height:12.05px;background:#efefef"></div>
<div style="left:335.50px;top:40.60px;width:83.88px;height:12.05px;background:#efefef"></div>
<div style="left:0;top:52.65px;width:83.88px;height:12.05px;background:#efefef"></div>
<div style="left:335.50px;top:52.65px;width:83.88px;height:12.05px;background:#efefef"></div>
<div style="left:0;top:64.70px;width:83.88px;height:12.05px;background:#efefef"></div>
<div style="left:335.50px;top:64.70px;width:83.88px;height:12.05px;background:#efefef"></div>
<div style="left:0;top:76.75px;width:83.88px;height:12.05px;background:#efefef"></div>
<div style="left:335.50px;top:76.75px;width:83.88px;height:12.05px;background:#efefef"></div>
<div style="left:-0.40px;top:0;width:0.8px;height:100px;background:#dde1e7"></div>
<div style="left:83.47px;top:0;width:0.8px;height:100px;background:#dde1e7"></div>
<div style="left:167.35px;top:0;width:0.8px;height:100px;background:#dde1e7"></div>
<div style="left:251.22px;top:0;width:0.8px;height:100px;background:#dde1e7"></div>
<div style="left:335.10px;top:0;width:0.8px;height:100px;background:#dde1e7"></div>
<div style="left:418.98px;top:0;width:0.8px;height:100px;background:#dde1e7"></div>
<div style="left:502.85px;top:0;width:0.8px;height:100px;background:#dde1e7"></div>
<div style="left:586.73px;top:0;width:0.8px;height:100px;background:#dde1e7"></div>
<div style="left:670.20px;top:0;width:0.8px;height:100px;background:#dde1e7"></div>
<div style="left:0;top:0.00px;width:671px;height:0.8px;background:#dde1e7"></div>
<div style="left:0;top:16.10px;width:671px;height:0.8px;background:#dde1e7"></div>
<div style="left:0;top:28.15px;width:671px;height:0.8px;background:#dde1e7"></div>
<div style="left:0;top:40.20px;width:671px;height:0.8px;background:#dde1e7"></div>
<div style="left:0;top:52.25px;width:671px;height:0.8px;background:#dde1e7"></div>
<div style="left:0;top:64.30px;width:671px;height:0.8px;background:#dde1e7"></div>
<div style="left:0;top:76.35px;width:671px;height:0.8px;background:#dde1e7"></div>
<div style="left:0;top:88.40px;width:671px;height:0.8px;background:#dde1e7"></div>
<div style="left:0.00px;width:83.88px;top:4px;text-align:center;font-size:5.5px;line-height:8px;color:#333;font-weight:bold;-webkit-text-stroke-width:0">分类</div>
<div style="left:83.88px;width:83.88px;top:4px;text-align:center;font-size:5.5px;line-height:8px;color:#333;font-weight:bold;-webkit-text-stroke-width:0">本月统计</div>
<div style="left:167.75px;width:83.88px;top:4px;text-align:center;font-size:5.5px;line-height:8px;color:#333;font-weight:bold;-webkit-text-stroke-width:0">上月同期</div>
<div style="left:251.62px;width:83.88px;top:4px;text-align:center;font-size:5.5px;line-height:8px;color:#333;font-weight:bold;-webkit-text-stroke-width:0">比较</div>
<div style="left:335.50px;width:83.88px;top:4px;text-align:center;font-size:5.5px;line-height:8px;color:#333;font-weight:bold;-webkit-text-stroke-width:0">分类</div>
<div style="left:419.38px;width:83.88px;top:4px;text-align:center;font-size:5.5px;line-height:8px;color:#333;font-weight:bold;-webkit-text-stroke-width:0">本月统计</div>
<div style="left:503.25px;width:83.88px;top:4px;text-align:center;font-size:5.5px;line-height:8px;color:#333;font-weight:bold;-webkit-text-stroke-width:0">上月同期</div>
<div style="left:587.12px;width:83.88px;top:4px;text-align:center;font-size:5.5px;line-height:8px;color:#333;font-weight:bold;-webkit-text-stroke-width:0">比较</div>
<div style="left:0;width:83.88px;top:18.80px;text-align:center;font-size:5.8px;line-height:8px;color:#444;-webkit-text-stroke-width:0.08px">新增客户</div>
<div style="left:335.50px;width:83.88px;top:18.80px;text-align:center;font-size:5.8px;line-height:8px;color:#444;-webkit-text-stroke-width:0.08px">收款金额</div>
<div style="left:83.88px;width:81.08px;top:18.80px;text-align:right;font-size:6.4px;line-height:8px;color:#555">0.00</div>
<div style="left:419.38px;width:81.08px;top:18.80px;text-align:right;font-size:6.4px;line-height:8px;color:#555">0.00</div>
<div style="left:167.75px;width:81.08px;top:18.80px;text-align:right;font-size:6.4px;line-height:8px;color:#555">0.00</div>
<div style="left:503.25px;width:81.08px;top:18.80px;text-align:right;font-size:6.4px;line-height:8px;color:#555">0.00</div>
<div style="left:251.62px;width:81.08px;top:18.80px;text-align:right;font-size:6.4px;line-height:8px;color:#555">0.00</div>
<div style="left:587.12px;width:81.08px;top:18.80px;text-align:right;font-size:6.4px;line-height:8px;color:#555">0.00</div>
<div style="left:0;width:83.88px;top:30.85px;text-align:center;font-size:5.8px;line-height:8px;color:#444;-webkit-text-stroke-width:0.08px">跟进客户</div>
<div style="left:335.50px;width:83.88px;top:30.85px;text-align:center;font-size:5.8px;line-height:8px;color:#444;-webkit-text-stroke-width:0.08px">付款金额</div>
<div style="left:83.88px;width:81.08px;top:30.85px;text-align:right;font-size:6.4px;line-height:8px;color:#555">0.00</div>
<div style="left:419.38px;width:81.08px;top:30.85px;text-align:right;font-size:6.4px;line-height:8px;color:#555">0.00</div>
<div style="left:167.75px;width:81.08px;top:30.85px;text-align:right;font-size:6.4px;line-height:8px;color:#555">0.00</div>
<div style="left:503.25px;width:81.08px;top:30.85px;text-align:right;font-size:6.4px;line-height:8px;color:#555">0.00</div>
<div style="left:251.62px;width:81.08px;top:30.85px;text-align:right;font-size:6.4px;line-height:8px;color:#555">0.00</div>
<div style="left:587.12px;width:81.08px;top:30.85px;text-align:right;font-size:6.4px;line-height:8px;color:#555">0.00</div>
<div style="left:0;width:83.88px;top:42.90px;text-align:center;font-size:5.8px;line-height:8px;color:#444;-webkit-text-stroke-width:0.08px">项目数量</div>
<div style="left:335.50px;width:83.88px;top:42.90px;text-align:center;font-size:5.8px;line-height:8px;color:#444;-webkit-text-stroke-width:0.08px">采购退款</div>
<div style="left:83.88px;width:81.08px;top:42.90px;text-align:right;font-size:6.4px;line-height:8px;color:#555">0.00</div>
<div style="left:419.38px;width:81.08px;top:42.90px;text-align:right;font-size:6.4px;line-height:8px;color:#555">0.00</div>
<div style="left:167.75px;width:81.08px;top:42.90px;text-align:right;font-size:6.4px;line-height:8px;color:#555">0.00</div>
<div style="left:503.25px;width:81.08px;top:42.90px;text-align:right;font-size:6.4px;line-height:8px;color:#555">0.00</div>
<div style="left:251.62px;width:81.08px;top:42.90px;text-align:right;font-size:6.4px;line-height:8px;color:#555">0.00</div>
<div style="left:587.12px;width:81.08px;top:42.90px;text-align:right;font-size:6.4px;line-height:8px;color:#555">0.00</div>
<div style="left:0;width:83.88px;top:54.95px;text-align:center;font-size:5.8px;line-height:8px;color:#444;-webkit-text-stroke-width:0.08px">销售金额</div>
<div style="left:335.50px;width:83.88px;top:54.95px;text-align:center;font-size:5.8px;line-height:8px;color:#444;-webkit-text-stroke-width:0.08px">销售退款</div>
<div style="left:83.88px;width:81.08px;top:54.95px;text-align:right;font-size:6.4px;line-height:8px;color:#555">63,383.00</div>
<div style="left:419.38px;width:81.08px;top:54.95px;text-align:right;font-size:6.4px;line-height:8px;color:#555">0.00</div>
<div style="left:167.75px;width:81.08px;top:54.95px;text-align:right;font-size:6.4px;line-height:8px;color:#555">0.00</div>
<div style="left:503.25px;width:81.08px;top:54.95px;text-align:right;font-size:6.4px;line-height:8px;color:#555">0.00</div>
<div style="left:251.62px;width:81.08px;top:54.95px;text-align:right;font-size:6.4px;line-height:8px;color:#555"><svg width="3" height="6" viewBox="0 0 3 6" style="vertical-align:-0.5px;margin-right:0.3px"><path d="M1.5 5.8V0.8M0.3 2.2L1.5 0.6L2.7 2.2" fill="none" stroke="#e03a3a" stroke-width="0.6"/></svg>63383.00</div>
<div style="left:587.12px;width:81.08px;top:54.95px;text-align:right;font-size:6.4px;line-height:8px;color:#555">0.00</div>
<div style="left:0;width:83.88px;top:67.00px;text-align:center;font-size:5.8px;line-height:8px;color:#444;-webkit-text-stroke-width:0.08px">采购金额</div>
<div style="left:335.50px;width:83.88px;top:67.00px;text-align:center;font-size:5.8px;line-height:8px;color:#444;-webkit-text-stroke-width:0.08px">工资金额</div>
<div style="left:83.88px;width:81.08px;top:67.00px;text-align:right;font-size:6.4px;line-height:8px;color:#555">0.00</div>
<div style="left:419.38px;width:81.08px;top:67.00px;text-align:right;font-size:6.4px;line-height:8px;color:#555">0.00</div>
<div style="left:167.75px;width:81.08px;top:67.00px;text-align:right;font-size:6.4px;line-height:8px;color:#555">0.00</div>
<div style="left:503.25px;width:81.08px;top:67.00px;text-align:right;font-size:6.4px;line-height:8px;color:#555">0.00</div>
<div style="left:251.62px;width:81.08px;top:67.00px;text-align:right;font-size:6.4px;line-height:8px;color:#555">0.00</div>
<div style="left:587.12px;width:81.08px;top:67.00px;text-align:right;font-size:6.4px;line-height:8px;color:#555">0.00</div>
<div style="left:0;width:83.88px;top:79.05px;text-align:center;font-size:5.8px;line-height:8px;color:#444;-webkit-text-stroke-width:0.08px">入库数量</div>
<div style="left:335.50px;width:83.88px;top:79.05px;text-align:center;font-size:5.8px;line-height:8px;color:#444;-webkit-text-stroke-width:0.08px">费用报销</div>
<div style="left:83.88px;width:81.08px;top:79.05px;text-align:right;font-size:6.4px;line-height:8px;color:#555">0.00</div>
<div style="left:419.38px;width:81.08px;top:79.05px;text-align:right;font-size:6.4px;line-height:8px;color:#555">0.00</div>
<div style="left:167.75px;width:81.08px;top:79.05px;text-align:right;font-size:6.4px;line-height:8px;color:#555">0.00</div>
<div style="left:503.25px;width:81.08px;top:79.05px;text-align:right;font-size:6.4px;line-height:8px;color:#555">0.00</div>
<div style="left:251.62px;width:81.08px;top:79.05px;text-align:right;font-size:6.4px;line-height:8px;color:#555">0.00</div>
<div style="left:587.12px;width:81.08px;top:79.05px;text-align:right;font-size:6.4px;line-height:8px;color:#555">0.00</div>
</div>
</body></html>
